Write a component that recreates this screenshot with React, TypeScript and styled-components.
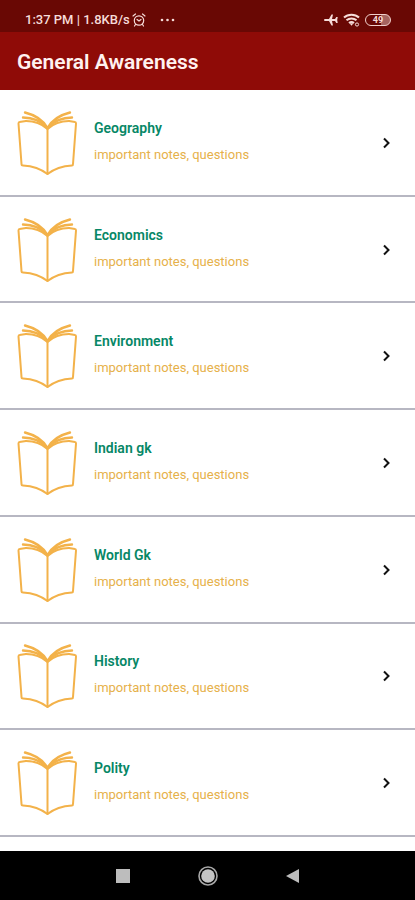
import React from "react";
import styled, { createGlobalStyle } from "styled-components";

const GlobalStyle = createGlobalStyle`
  * { box-sizing: border-box; }
  body {
    margin: 0;
    background: #fff;
    font-family: Roboto, "Liberation Sans", sans-serif;
  }
`;

const Screen = styled.div`
  display: flex;
  flex-direction: column;
  min-height: 100vh;
`;

const StatusBar = styled.div`
  display: flex;
  align-items: center;
  justify-content: space-between;
  height: 32px;
  padding: 8px 24px 0 25px;
  background: #690804;
  color: #f6dcd9;
  font-size: 13px;
  font-weight: 500;
  line-height: 16px;
`;

const StatusGroup = styled.div<{ $gap: number }>`
  display: flex;
  align-items: center;
  gap: ${({ $gap }) => $gap}px;
  white-space: nowrap;

  svg { display: block; }
`;

const StatusDots = styled.span`
  display: flex;
  padding-left: 12px;
`;

const Battery = styled.span`
  display: flex;
  align-items: center;
  justify-content: center;
  width: 26px;
  height: 12px;
  border: 1px solid #f0cfcb;
  border-radius: 6px;
  background: linear-gradient(90deg, transparent 62%, #a5645f 62%);
  font-size: 9px;
  font-weight: 700;
  line-height: 10px;
`;

const AppBar = styled.header`
  display: flex;
  align-items: center;
  height: 58px;
  padding: 0 17px;
  background: #8f0b07;
`;

const Title = styled.h1`
  margin: 0;
  padding-top: 2px;
  color: #fff2f0;
  font-size: 21px;
  font-weight: 600;
  line-height: 28px;
`;

const TopicList = styled.ul`
  display: flex;
  flex: 1;
  flex-direction: column;
  margin: 0;
  padding: 0 0 14px;
  list-style: none;
`;

const TopicItem = styled.li`
  display: flex;
  flex: 1 0 106px;
  border-bottom: 2px solid #b7b7c2;
`;

const TopicButton = styled.button`
  display: flex;
  flex: 1;
  align-items: center;
  gap: 17px;
  padding: 1px 21px 0 17px;
  border: 0;
  background: #fff;
  color: #111;
  font: inherit;
  text-align: left;
  cursor: pointer;

  svg { flex: none; display: block; }
`;

const TopicText = styled.span`
  display: flex;
  flex: 1;
  flex-direction: column;
  gap: 10px;
  padding-bottom: 4px;
`;

const TopicName = styled.span`
  color: #078766;
  font-size: 14px;
  font-weight: 600;
  line-height: 18px;
`;

const TopicNote = styled.span`
  color: #e6b14a;
  font-size: 13px;
  line-height: 16px;
`;

const NavBar = styled.nav`
  display: flex;
  align-items: center;
  justify-content: center;
  gap: 61px;
  height: 49px;
  background: #000;
`;

const NavButton = styled.button`
  display: flex;
  align-items: center;
  justify-content: center;
  width: 24px;
  height: 24px;
  padding: 0;
  border: 0;
  background: none;
  cursor: pointer;
`;

const BookIcon = () => (
  <svg width="60" height="66" viewBox="0 0 60 66" fill="none" stroke="#f3b24a" strokeWidth="2" strokeLinejoin="round" strokeLinecap="round" aria-hidden="true">
    <path d="M9 11L2.5 12Q1.5 12 1.5 13.5L4.5 54Q4.5 55.5 6 55.5C15 56 24 59 30.5 64C37 59 46 56 55 55.5Q56 55.5 56 54L59 13.5Q59 12 58 12L52 11" />
    <path d="M30.5 19V64" />
    <path d="M8 2.5C18 5 26 10 30.5 18C35 10 43 5 53 2.5" strokeWidth="2.4" />
    <path d="M6 7.5C16 7.5 25 12 30.5 18C36 12 45 7.5 55 7.5" strokeWidth="2.4" />
    <path d="M9 11C18 11 25 14 30.5 19C36 14 43 11 52 11" />
    <path d="M19 7C24 9 28 13 30.5 19C33 13 37 9 42 7C38 12 34 17 30.5 20C27 17 23 12 19 7Z" fill="#f3b24a" stroke="none" />
  </svg>
);

const ChevronIcon = () => (
  <svg width="14" height="14" viewBox="0 0 14 14" fill="none" stroke="currentColor" strokeWidth="2" aria-hidden="true">
    <path d="M4 2.5L8.5 7L4 11.5" />
  </svg>
);

const AlarmIcon = () => (
  <svg width="14" height="14" viewBox="0 0 14 14" fill="none" stroke="currentColor" strokeWidth="1.2" strokeLinecap="round" aria-hidden="true">
    <circle cx="7" cy="7.5" r="4.7" />
    <path d="M1 3L3.5 1M13 3L10.5 1M3.5 11.5L2.5 13M10.5 11.5L11.5 13M5 6.5L7 8L9 6.5" />
  </svg>
);

const DotsIcon = () => (
  <svg width="16" height="4" viewBox="0 0 16 4" fill="currentColor" aria-hidden="true">
    <circle cx="2" cy="2" r="1.3" />
    <circle cx="7.5" cy="2" r="1.3" />
    <circle cx="13" cy="2" r="1.3" />
  </svg>
);

const PlaneIcon = () => (
  <svg width="14" height="12" viewBox="0 0 14 12" fill="currentColor" aria-hidden="true">
    <path d="M0 6C0 5.3.7 5 1.5 5H5L7.5.5H9L8 5H11L12.3 3H13.7L13.2 6L13.7 9H12.3L11 7H8L9 11.5H7.5L5 7H1.5C.7 7 0 6.7 0 6Z" />
  </svg>
);

const WifiIcon = () => (
  <svg width="17" height="14" viewBox="0 0 17 14" fill="none" stroke="currentColor" strokeWidth="2" aria-hidden="true">
    <path d="M1 4.5C5 .8 12 .8 16 4.5M3.5 7.3C6.3 4.8 10.7 4.8 13.5 7.3M6 10C7.5 8.7 9.5 8.7 11 10" />
    <path d="M6.5 10.3L8.5 12.7L10.5 10.3Z" fill="currentColor" stroke="none" />
    <circle cx="14" cy="11.5" r="1.6" strokeWidth="1" />
  </svg>
);

const topics = ["Geography", "Economics", "Environment", "Indian gk", "World Gk", "History", "Polity"];

export default function App() {
  return (
    <Screen>
      <GlobalStyle />
      <StatusBar>
        <StatusGroup $gap={2}>
          <span>1:37 PM | 1.8KB/s</span>
          <AlarmIcon />
          <StatusDots>
            <DotsIcon />
          </StatusDots>
        </StatusGroup>
        <StatusGroup $gap={5}>
          <PlaneIcon />
          <WifiIcon />
          <Battery>49</Battery>
        </StatusGroup>
      </StatusBar>
      <AppBar>
        <Title>General Awareness</Title>
      </AppBar>
      <TopicList>
        {topics.map((topic) => (
          <TopicItem key={topic}>
            <TopicButton type="button">
              <BookIcon />
              <TopicText>
                <TopicName>{topic}</TopicName>
                <TopicNote>important notes, questions</TopicNote>
              </TopicText>
              <ChevronIcon />
            </TopicButton>
          </TopicItem>
        ))}
      </TopicList>
      <NavBar aria-label="System">
        <NavButton type="button" aria-label="Recent apps">
          <svg width="14" height="14" viewBox="0 0 14 14" aria-hidden="true">
            <rect width="14" height="14" fill="#bdbdbd" />
          </svg>
        </NavButton>
        <NavButton type="button" aria-label="Home">
          <svg width="20" height="20" viewBox="0 0 20 20" fill="none" aria-hidden="true">
            <circle cx="10" cy="10" r="9" stroke="#a8a8a8" strokeWidth="1.6" />
            <circle cx="10" cy="10" r="6.8" fill="#c4c4c4" />
          </svg>
        </NavButton>
        <NavButton type="button" aria-label="Back">
          <svg width="14" height="14" viewBox="0 0 14 14" aria-hidden="true">
            <path d="M0 7L13 0V14Z" fill="#bdbdbd" />
          </svg>
        </NavButton>
      </NavBar>
    </Screen>
  );
}
